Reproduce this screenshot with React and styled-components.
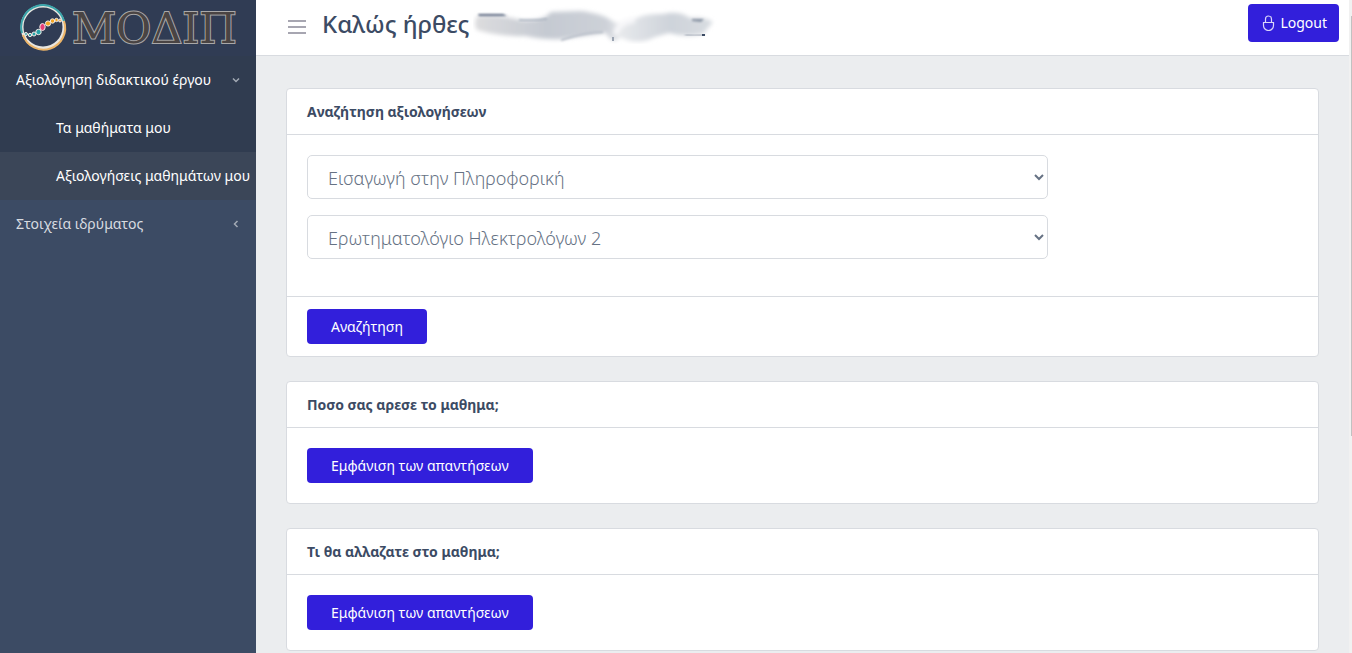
import React from 'react';
import styled, { createGlobalStyle } from 'styled-components';

const GlobalStyle = createGlobalStyle`
  *, *::before, *::after { box-sizing: border-box; }
  body {
    margin: 0;
    background: #ebedef;
    color: #3c4b64;
    font-family: "Segoe UI", "Noto Sans", "Open Sans", sans-serif;
    font-size: 14px;
    line-height: 20px;
  }
`;

const Shell = styled.div`
  display: flex;
  height: 100vh;
  overflow: hidden;
`;

const Sidebar = styled.aside`
  flex: 0 0 256px;
  background: #3c4b64;
  color: #fff;
`;

const Brand = styled.a`
  display: flex;
  align-items: center;
  height: 56px;
  padding-left: 20px;
  background: #303c54;
`;

const NavGroup = styled.div`
  background: ${(p) => (p.$open ? '#303c50' : 'transparent')};
`;

const NavToggle = styled.button`
  display: flex;
  align-items: center;
  justify-content: space-between;
  width: 100%;
  height: 48px;
  padding: 0 16px;
  border: 0;
  background: transparent;
  color: ${(p) => (p.$open ? '#fff' : '#d8dbe0')};
  font: inherit;
  white-space: nowrap;
`;

const NavItem = styled.a`
  display: flex;
  align-items: center;
  height: 48px;
  padding-left: 56px;
  background: ${(p) => (p.$active ? '#3b4658' : 'transparent')};
  color: #fff;
  text-decoration: none;
  white-space: nowrap;
`;

const Main = styled.div`
  display: flex;
  flex: 1;
  flex-direction: column;
  min-width: 0;
`;

const Header = styled.header`
  display: flex;
  flex: 0 0 56px;
  align-items: flex-start;
  padding: 4px 10px 0 32px;
  border-bottom: 1px solid #d8dbe0;
  background: #fff;
`;

const MenuButton = styled.button`
  display: flex;
  margin: 14px 16px 0 0;
  padding: 0;
  border: 0;
  background: transparent;
`;

const Title = styled.h1`
  display: flex;
  flex: 1;
  align-items: center;
  gap: 4px;
  margin: 0;
  font-size: 24px;
  font-weight: 500;
  line-height: 40px;
  white-space: nowrap;
`;

const Button = styled.button`
  display: inline-flex;
  align-items: center;
  justify-content: center;
  gap: 4px;
  height: ${(p) => (p.$compact ? 38 : 35)}px;
  padding: 0 ${(p) => (p.$compact ? 12 : 24)}px;
  border: 0;
  border-radius: 4px;
  background: #321fdb;
  color: #fff;
  font: inherit;
  white-space: nowrap;
`;

const Content = styled.main`
  display: flex;
  flex: 1;
  flex-direction: column;
  gap: 24px;
  min-height: 0;
  padding: 32px 30px;
  overflow-y: auto;
  scrollbar-width: none;
`;

const Card = styled.section`
  flex: none;
  border: 1px solid #d8dbe0;
  border-radius: 4px;
  background: #fff;
`;

const CardTitle = styled.h2`
  margin: 0;
  padding: 13px 20px 12px;
  border-bottom: 1px solid #d8dbe0;
  font-size: 14px;
  font-weight: 700;
  line-height: 20px;
`;

const CardBody = styled.div`
  padding: 20px;
`;

const SearchFields = styled.div`
  display: flex;
  flex-direction: column;
  gap: 16px;
  padding: 20px 20px 37px;
`;

const Select = styled.select`
  width: calc(75% - 2px);
  height: 44px;
  padding: 2px 16px 0;
  border: 1px solid #d8dbe0;
  border-radius: 5px;
  background: #fff;
  color: #667284;
  font-family: inherit;
  font-size: 18px;
  font-weight: 300;
`;

const CardFooter = styled.div`
  padding: 12px 20px;
  border-top: 1px solid #d8dbe0;
`;

const ScrollRail = styled.div`
  flex: 0 0 3px;
  padding: 16px 0 0 2px;
  background: #f1f1f1;
`;

const ScrollThumb = styled.div`
  height: 66%;
  background: #c1c1c1;
`;

function Logo() {
  return (
    <svg width="222" height="52" viewBox="0 0 222 52" role="img" aria-label="ΜΟΔΙΠ">
      <g fill="none">
        <circle cx="23" cy="25" r="21" stroke="#e8e6e0" strokeWidth="3" />
        <path d="M2 31A21 21 0 0 1 44 19" stroke="#3ba5ab" strokeWidth="2" />
        <path d="M44 19A21 21 0 0 1 3 33" stroke="#edb568" strokeWidth="2" />
      </g>
      <g stroke="#f3eee8" strokeWidth="1">
        <circle cx="6" cy="32" r="1.500" fill="#3ba5ab" />
        <circle cx="10" cy="33" r="1.700" fill="#3ba5ab" />
        <circle cx="14" cy="32" r="2" fill="#25a3aa" />
        <circle cx="18.500" cy="30" r="2.700" fill="#25a3aa" />
        <ellipse cx="22.500" cy="25" rx="2.700" ry="3.500" fill="#e83e78" />
        <circle cx="28" cy="21.500" r="2.600" fill="#f5a623" />
        <circle cx="32.500" cy="19" r="2.200" fill="#f5a623" />
        <circle cx="36.500" cy="18" r="1.700" fill="#f5a623" />
        <circle cx="40" cy="18.500" r="1.500" fill="#edb568" />
      </g>
      <text
        x="52"
        y="41"
        fill="#4a4443"
        stroke="#a9a8a8"
        strokeWidth="2"
        paintOrder="stroke"
        fontFamily="DejaVu Serif, serif"
        fontSize="43"
      >
        ΜΟΔΙΠ
      </text>
    </svg>
  );
}

function Chevron({ open }) {
  return (
    <svg width="8" height="8" viewBox="0 0 8 8" fill="none" stroke="#a3aab5" strokeWidth="1.5" aria-hidden="true">
      <path d={open ? 'M1 2.5L4 5.5L7 2.5' : 'M5.5 1L2.5 4L5.5 7'} />
    </svg>
  );
}

function ObscuredName() {
  return (
    <svg width="244" height="40" viewBox="0 0 244 40" aria-hidden="true">
      <defs>
        <filter id="smear" x="-5%" y="-20%" width="110%" height="140%">
          <feGaussianBlur stdDeviation="2" />
        </filter>
        <filter id="edge" x="-10%" y="-100%" width="120%" height="300%">
          <feGaussianBlur stdDeviation="0.9" />
        </filter>
        <linearGradient id="ink" x1="0" x2="1">
          <stop offset="0" stopColor="#dcdcde" />
          <stop offset="0.3" stopColor="#c5cad2" />
          <stop offset="0.55" stopColor="#cdd1d8" />
          <stop offset="0.62" stopColor="#e6e8eb" />
          <stop offset="0.82" stopColor="#ced3da" />
          <stop offset="1" stopColor="#d8dce1" />
        </linearGradient>
      </defs>
      <g filter="url(#smear)">
        <path
          fill="url(#ink)"
          d="M4 12Q0 20 4 26Q28 33 52 32Q72 36 88 35L133 29Q140 42 147 33Q164 42 182 33L196 29Q214 34 230 30L240 18Q230 12 217 14Q206 6 190 10Q170 9 160 16L142 19Q132 10 108 7L78 8Q70 18 48 16Q24 10 4 12Z"
        />
        <path d="M143 31Q144 18 162 16" fill="none" stroke="#f7f7f9" strokeWidth="6" />
      </g>
      <g fill="none">
        <path d="M5 10L30 10L34 12L6 12Z" fill="#5c6981" filter="url(#edge)" />
        <path d="M46 16Q62 17 74 15" stroke="#a4adbb" strokeWidth="1.500" filter="url(#edge)" />
        <path d="M88 36Q112 28 130 28" stroke="#b9bfc9" strokeWidth="2" filter="url(#edge)" />
        <path d="M219 15L231 15L228 18L219 17Z" fill="#8c96a6" filter="url(#edge)" />
        <path d="M212 31Q222 32 231 31" stroke="#a2a9b6" strokeWidth="1.500" filter="url(#edge)" />
      </g>
      <path d="M229 30h3v2h-3z" fill="#3c4b64" />
      <path d="M139 33h2v4h-2z" fill="#9aa3b1" />
    </svg>
  );
}

const surveyQuestions = ['Ποσο σας αρεσε το μαθημα;', 'Τι θα αλλαζατε στο μαθημα;'];

export default function App() {
  return (
    <Shell>
      <GlobalStyle />
      <Sidebar>
        <Brand href="#">
          <Logo />
        </Brand>
        <nav>
          <NavGroup $open>
            <NavToggle type="button" $open aria-expanded="true">
              Αξιολόγηση διδακτικού έργου
              <Chevron open />
            </NavToggle>
            <NavItem href="#courses">Τα μαθήματα μου</NavItem>
            <NavItem href="#evaluations" $active aria-current="page">
              Αξιολογήσεις μαθημάτων μου
            </NavItem>
          </NavGroup>
          <NavGroup>
            <NavToggle type="button" aria-expanded="false">
              Στοιχεία ιδρύματος
              <Chevron />
            </NavToggle>
          </NavGroup>
        </nav>
      </Sidebar>
      <Main>
        <Header>
          <MenuButton type="button" aria-label="Μενού">
            <svg width="18" height="18" viewBox="0 0 18 18" stroke="#8a8998" strokeWidth="1.500" aria-hidden="true">
              <path d="M0 3H18M0 9H18M0 15H18" />
            </svg>
          </MenuButton>
          <Title>
            Καλώς ήρθες
            <ObscuredName />
          </Title>
          <Button type="button" $compact>
            <svg width="16" height="16" viewBox="0 0 16 16" fill="none" stroke="#d9d5fa" strokeWidth="1.200" aria-hidden="true">
              <path d="M3.500 7.500H13.500V10.500A5 5 0 0 1 3.500 10.500ZM5.500 7V4A3 3 0 0 1 11.500 4V7" />
            </svg>
            Logout
          </Button>
        </Header>
        <Content>
          <Card>
            <CardTitle>Αναζήτηση αξιολογήσεων</CardTitle>
            <SearchFields>
              <Select aria-label="Μάθημα">
                <option>Εισαγωγή στην Πληροφορική</option>
              </Select>
              <Select aria-label="Ερωτηματολόγιο">
                <option>Ερωτηματολόγιο Ηλεκτρολόγων 2</option>
              </Select>
            </SearchFields>
            <CardFooter>
              <Button type="button">Αναζήτηση</Button>
            </CardFooter>
          </Card>
          {surveyQuestions.map((question) => (
            <Card key={question}>
              <CardTitle>{question}</CardTitle>
              <CardBody>
                <Button type="button">Εμφάνιση των απαντήσεων</Button>
              </CardBody>
            </Card>
          ))}
        </Content>
      </Main>
      <ScrollRail aria-hidden="true">
        <ScrollThumb />
      </ScrollRail>
    </Shell>
  );
}
